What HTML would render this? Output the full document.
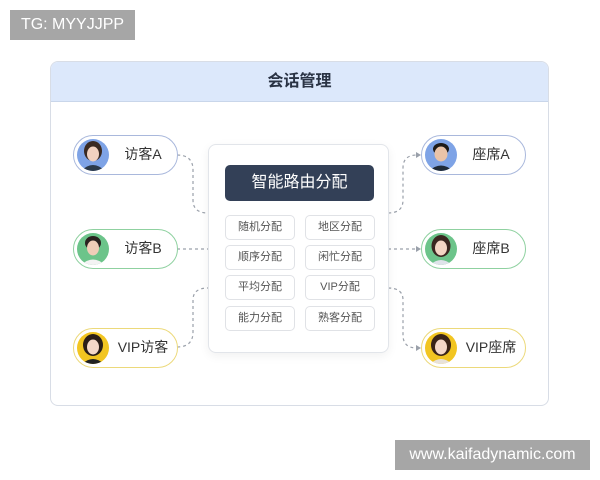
<!DOCTYPE html>
<html><head><meta charset="utf-8"><style>
*{margin:0;padding:0;box-sizing:border-box}
body{width:600px;height:480px;background:#fff;position:relative;overflow:hidden;font-family:"Liberation Sans","Noto Sans CJK SC",sans-serif;color:#333}
.wm{position:absolute;background:#a6a6a6;color:#fff;font-size:16px;display:flex;align-items:center;justify-content:center}
.card{position:absolute;left:50px;top:61px;width:499px;height:345px;border:1px solid #d8dde6;border-radius:8px;overflow:hidden;background:#fff}
.hdr{height:40px;background:#dce8fb;border-bottom:1px solid #c9d6ea;text-align:center;line-height:40px;font-size:16px;font-weight:bold;color:#2a3344}
.pill{position:absolute;width:105px;height:40px;border-radius:20px;border:1.5px solid;background:#fff;font-size:14px;color:#333}
.pill .av{position:absolute;left:3px;top:3px;width:32px;height:32px;border-radius:50%;overflow:hidden}
.pill span{position:absolute;left:35px;right:0;top:0;line-height:37px;text-align:center}
.panel{position:absolute;left:208px;top:144px;width:181px;height:209px;border:1px solid #e2e5ea;border-radius:8px;background:#fff;box-shadow:0 3px 10px rgba(0,0,0,.06)}
.dark{position:absolute;left:225px;top:165px;width:149px;height:36px;background:#334057;border-radius:5px;color:#fff;font-size:16px;text-align:center;line-height:36px}
.b{position:absolute;width:70px;height:25px;border:1px solid #e0e2e6;border-radius:5px;font-size:11px;color:#555;text-align:center;line-height:23px;background:#fff}
svg.l{position:absolute;left:0;top:0}
</style></head><body>
<div class="wm" style="left:10px;top:10px;width:125px;height:30px">TG: MYYJJPP</div>
<div class="card"><div class="hdr">会话管理</div></div>
<svg class="l" width="600" height="480">
<g fill="none" stroke="#9aa0aa" stroke-width="1.2" stroke-dasharray="3,3">
<path d="M177 155 Q193 155 193 170 L193 200 Q193 213 208 213"/>
<path d="M177 249 L208 249"/>
<path d="M177 347 Q193 347 193 332 L193 300 Q193 288 208 288"/>
<path d="M388 213 Q403 213 403 200 L403 168 Q403 155 417 155"/>
<path d="M388 249 L417 249"/>
<path d="M388 288 Q403 288 403 300 L403 335 Q403 348 417 348"/>
</g>
<g fill="#9aa0aa"><path d="M421 155 l-5 -3 v6z"/><path d="M421 249 l-5 -3 v6z"/><path d="M421 348 l-5 -3 v6z"/></g>
</svg>
<div class="panel"></div>
<div class="dark">智能路由分配</div>
<div class="b" style="left:225px;top:215px">随机分配</div><div class="b" style="left:305px;top:215px">地区分配</div>
<div class="b" style="left:225px;top:245px">顺序分配</div><div class="b" style="left:305px;top:245px">闲忙分配</div>
<div class="b" style="left:225px;top:275px">平均分配</div><div class="b" style="left:305px;top:275px">VIP分配</div>
<div class="b" style="left:225px;top:306px">能力分配</div><div class="b" style="left:305px;top:306px">熟客分配</div>

<div class="pill" style="left:73px;top:135px;border-color:#a9b8dc"><div class="av" style="background:#7ea3e6"><svg width="32" height="32"><ellipse cx="16" cy="12" rx="9" ry="10" fill="#3a2a22"/><ellipse cx="16" cy="15" rx="6" ry="7.5" fill="#f2d2c0"/><path d="M4 32 Q16 20 28 32Z" fill="#2c3a4a"/></svg></div><span>访客A</span></div>
<div class="pill" style="left:73px;top:229px;border-color:#8fd1a0"><div class="av" style="background:#6cc48a"><svg width="32" height="32"><ellipse cx="16" cy="10" rx="8" ry="7" fill="#2a2220"/><ellipse cx="16" cy="15" rx="6" ry="7.5" fill="#efcdb8"/><path d="M4 32 Q16 21 28 32Z" fill="#f3f3f3"/></svg></div><span>访客B</span></div>
<div class="pill" style="left:73px;top:328px;border-color:#ecd97a"><div class="av" style="background:#f2c521"><svg width="32" height="32"><ellipse cx="16" cy="13" rx="10" ry="11" fill="#2a1e18"/><ellipse cx="16" cy="15" rx="6" ry="7.5" fill="#f4d8c8"/><path d="M5 32 Q16 22 27 32Z" fill="#222"/></svg></div><span>VIP访客</span></div>

<div class="pill" style="left:421px;top:135px;border-color:#a9b8dc"><div class="av" style="background:#7ea3e6"><svg width="32" height="32"><ellipse cx="16" cy="10" rx="8" ry="6" fill="#1e1a18"/><ellipse cx="16" cy="15" rx="6.5" ry="7.5" fill="#eac3a8"/><path d="M4 32 Q16 21 28 32Z" fill="#1f2a38"/></svg></div><span>座席A</span></div>
<div class="pill" style="left:421px;top:229px;border-color:#8fd1a0"><div class="av" style="background:#6cc48a"><svg width="32" height="32"><ellipse cx="16" cy="13" rx="9.5" ry="11" fill="#3a2620"/><ellipse cx="16" cy="15" rx="6" ry="7.5" fill="#f3d5c4"/><path d="M5 32 Q16 22 27 32Z" fill="#dfe3ea"/></svg></div><span>座席B</span></div>
<div class="pill" style="left:421px;top:328px;border-color:#ecd97a"><div class="av" style="background:#f2c521"><svg width="32" height="32"><ellipse cx="16" cy="13" rx="10" ry="11" fill="#3a2418"/><ellipse cx="16" cy="15" rx="6" ry="7.5" fill="#f4d8c8"/><path d="M5 32 Q16 22 27 32Z" fill="#e8e2da"/></svg></div><span>VIP座席</span></div>

<div class="wm" style="left:395px;top:440px;width:195px;height:30px">www.kaifadynamic.com</div>
</body></html>
